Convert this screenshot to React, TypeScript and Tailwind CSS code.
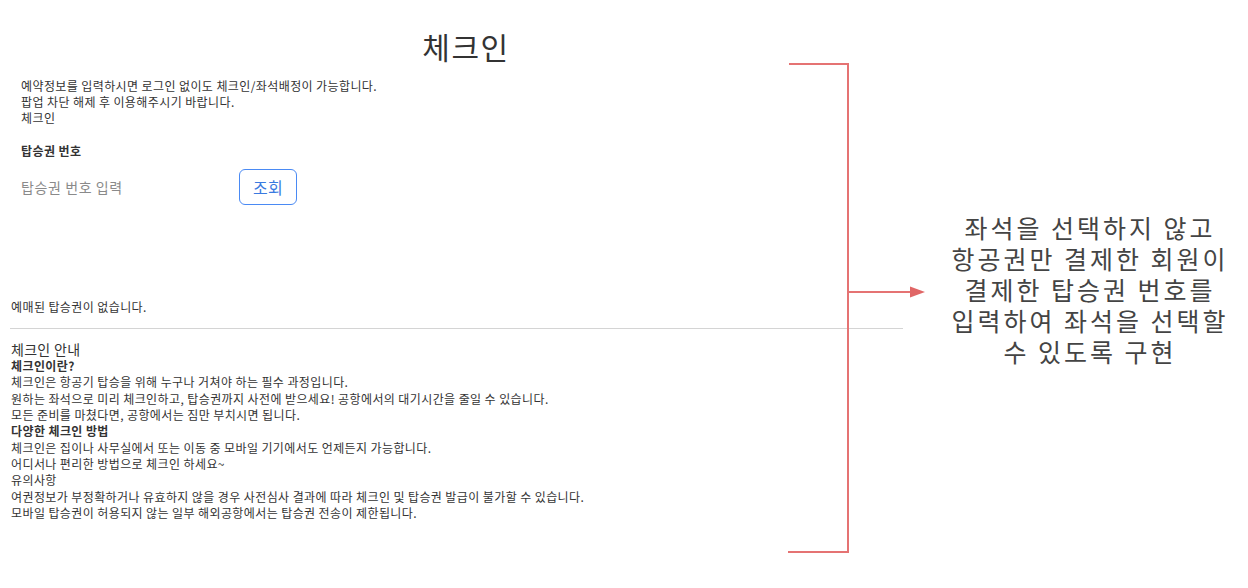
import React from "react";

const guideLines: { text: string; bold?: boolean }[] = [
  { text: "체크인이란?", bold: true },
  { text: "체크인은 항공기 탑승을 위해 누구나 거쳐야 하는 필수 과정입니다." },
  { text: "원하는 좌석으로 미리 체크인하고, 탑승권까지 사전에 받으세요! 공항에서의 대기시간을 줄일 수 있습니다." },
  { text: "모든 준비를 마쳤다면, 공항에서는 짐만 부치시면 됩니다." },
  { text: "다양한 체크인 방법", bold: true },
  { text: "체크인은 집이나 사무실에서 또는 이동 중 모바일 기기에서도 언제든지 가능합니다." },
  { text: "어디서나 편리한 방법으로 체크인 하세요~" },
  { text: "유의사항" },
  { text: "여권정보가 부정확하거나 유효하지 않을 경우 사전심사 결과에 따라 체크인 및 탑승권 발급이 불가할 수 있습니다." },
  { text: "모바일 탑승권이 허용되지 않는 일부 해외공항에서는 탑승권 전송이 제한됩니다." },
];

const note = [
  "좌석을 선택하지 않고",
  "항공권만 결제한 회원이",
  "결제한 탑승권 번호를",
  "입력하여 좌석을 선택할",
  "수 있도록 구현",
];

function Bracket() {
  // annotation bracket + arrow pointing to the note
  return (
    <svg
      className="pointer-events-none absolute left-0 top-0"
      width="1248"
      height="588"
      viewBox="0 0 1248 588"
    >
      <polyline
        points="789,64 848,64 848,552 788,552"
        fill="none"
        stroke="#e57373"
        strokeWidth="2"
      />
      <line x1="848" y1="292" x2="912" y2="292" stroke="#e57373" strokeWidth="2" />
      <polygon points="910,286.5 925,292 910,297.5" fill="#e06666" />
    </svg>
  );
}

export default function App() {
  return (
    <div className="relative flex h-[588px] w-[1248px] overflow-hidden bg-white font-['Noto_Sans_CJK_KR',sans-serif] text-[#333]">
      <div className="flex w-[932px] flex-col">
        <h1 className="pt-[25px] text-center text-[30px] font-normal leading-[42px] tracking-[1.5px] text-[#333]">
          체크인
        </h1>

        <div className="pl-[21px] pt-[11px] text-[12px] leading-[16px] tracking-[0.4px]">
          <p>예약정보를 입력하시면 로그인 없이도 체크인/좌석배정이 가능합니다.</p>
          <p>팝업 차단 해제 후 이용해주시기 바랍니다.</p>
          <p>체크인</p>

          <p className="mt-[17px] font-bold">탑승권 번호</p>

          <div className="mt-[10px] flex items-center">
            <input
              type="text"
              placeholder="탑승권 번호 입력"
              className="w-[218px] bg-transparent text-[14px] tracking-[0.6px] outline-none placeholder:text-[#8a8a8a]"
            />
            <button
              type="button"
              className="h-[36px] w-[58px] rounded-[6px] border border-[#4a8af4] text-[16px] text-[#3a7ae0]"
            >
              조회
            </button>
          </div>
        </div>

        <p className="mt-[94px] pl-[11px] text-[12px] leading-[16px] tracking-[0.4px]">
          예매된 탑승권이 없습니다.
        </p>

        <div className="ml-[10px] mt-[13px] h-px w-[893px] bg-[#d4d4d4]" />

        <div className="pl-[11px] pt-[11px]">
          <p className="text-[14px] leading-[18px] tracking-[0.3px]">체크인 안내</p>
          <div className="text-[12px] leading-[16.33px] tracking-[0.4px]">
            {guideLines.map((line, i) => (
              <p key={i} className={line.bold ? "font-bold" : ""}>
                {line.text}
              </p>
            ))}
          </div>
        </div>
      </div>

      <div className="flex flex-1 flex-col items-center pt-[212px] text-center text-[25px] leading-[31px] tracking-[3px] text-[#444]">
        {note.map((l) => (
          <p key={l}>{l}</p>
        ))}
      </div>

      <Bracket />
    </div>
  );
}
